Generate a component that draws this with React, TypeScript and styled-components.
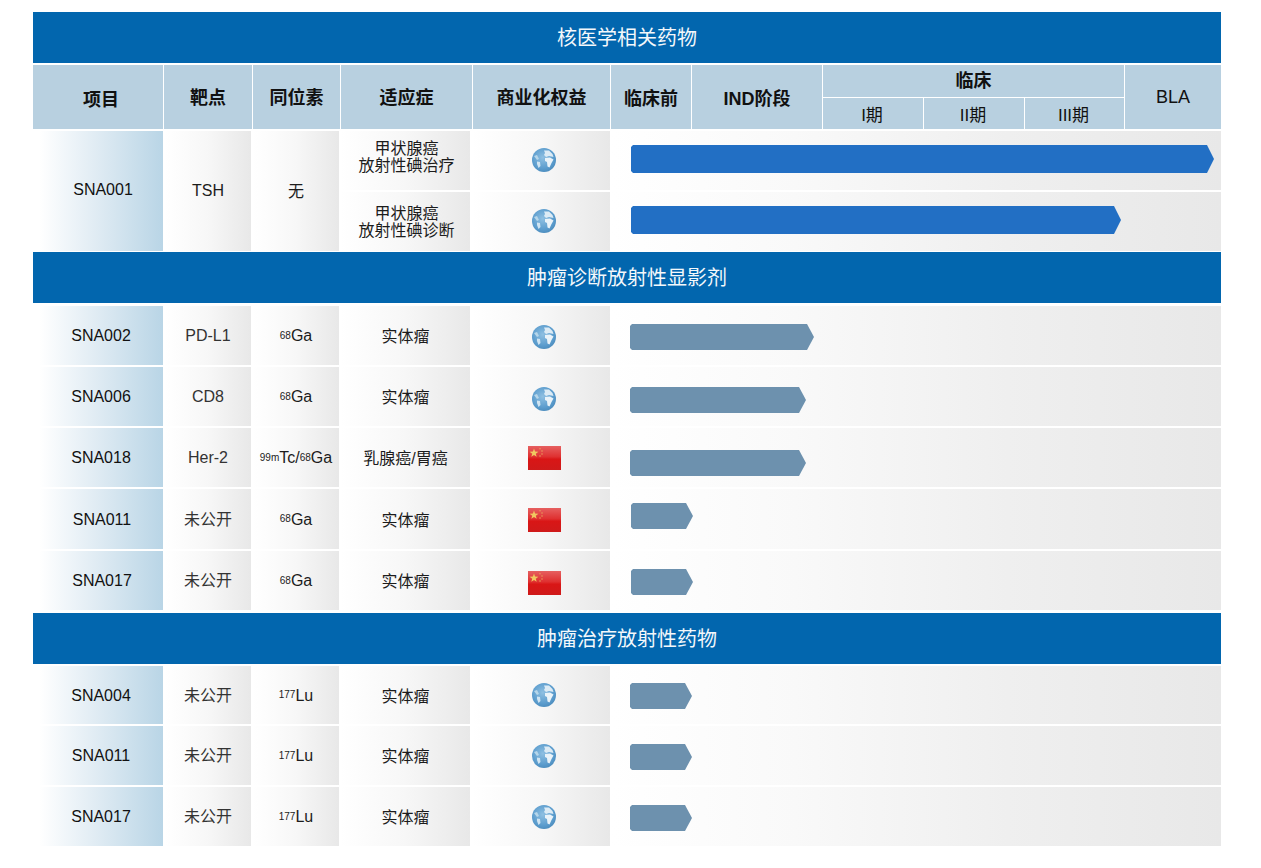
import React from 'react';
import styled, { createGlobalStyle } from 'styled-components';

const GlobalStyle = createGlobalStyle`
  * {
    box-sizing: border-box;
  }
  html, body {
    margin: 0;
    background: #fff;
    font-family: 'Liberation Sans', 'Noto Sans CJK SC', sans-serif;
    color: #1c1c1c;
  }
`;

const Page = styled.div`
  width: 1221px;
  padding: 12px 0 0 33px;
`;

const Banner = styled.div<{ $after: number }>`
  height: 51px;
  margin-bottom: ${(p) => p.$after}px;
  padding-bottom: 2px;
  display: flex;
  align-items: center;
  justify-content: center;
  background: #0266ae;
  color: #f4f8fb;
  font-size: 20px;
`;

const Head = styled.div`
  display: grid;
  grid-template-columns: 130px 88px 87px 131px 137px 80px 130px 301px 96px;
  column-gap: 1px;
  height: 64px;
  margin-bottom: 2px;
`;

const HeadCell = styled.div<{ $plain?: boolean; $drop?: number; $right?: number }>`
  display: flex;
  align-items: center;
  justify-content: center;
  padding: ${(p) => p.$drop ?? 0}px 0 2px ${(p) => p.$right ?? 0}px;
  background: #b8d0e0;
  font-size: 18px;
  font-weight: ${(p) => (p.$plain ? 400 : 700)};
  color: #111;
`;

const Clinical = styled.div`
  display: flex;
  flex-direction: column;
  row-gap: 1px;
`;

const ClinicalTitle = styled(HeadCell)`
  height: 32px;
  padding-bottom: 4px;
`;

const Phases = styled.div`
  flex: 1;
  display: grid;
  grid-template-columns: 100px 100px 99px;
  column-gap: 1px;
`;

const Phase = styled(HeadCell)`
  font-size: 17px;
  font-weight: 400;
  padding: 0 2px 0 0;
`;

const Rows = styled.div<{ $heights: string; $after: number }>`
  display: grid;
  grid-template-columns: 130px 86px 86px 129px 138px 1fr;
  grid-template-rows: ${(p) => p.$heights};
  gap: 2px;
  margin-bottom: ${(p) => p.$after}px;
`;

const Cell = styled.div<{ $span?: number; $lift?: number }>`
  grid-row: span ${(p) => p.$span ?? 1};
  display: flex;
  align-items: center;
  justify-content: center;
  padding-bottom: ${(p) => p.$lift ?? 0}px;
  text-align: center;
  font-size: 16px;
  line-height: 17px;
  background: linear-gradient(90deg, #fff 0%, #f7f7f7 50%, #e8e8e8 100%);
`;

const ProjectCell = styled(Cell)<{ $right?: number }>`
  padding-left: ${(p) => p.$right ?? 6}px;
  color: #111;
  background: linear-gradient(90deg, #fff 5%, #dfebf3 50%, #b9d5e6 100%);
`;

const TargetCell = styled(Cell)`
  color: #333;
`;

const IndicationCell = styled(Cell)<{ $top?: number }>`
  padding-top: ${(p) => p.$top ?? 2}px;
  padding-left: ${(p) => ((p.$top ?? 2) === 2 ? 0 : 2)}px;
`;

const RightsCell = styled(Cell)<{ $drop?: number }>`
  padding-left: 6px;
  padding-top: ${(p) => p.$drop ?? 0}px;
`;

const Sup = styled.sup`
  font-size: 10px;
  line-height: 0;
  vertical-align: 6px;
`;

const Track = styled(Cell)`
  justify-content: flex-start;
  align-items: flex-start;
  padding-left: 18px;
  background: linear-gradient(90deg, #fff 0%, #f9f9f9 30%, #efefef 65%, #e8e8e8 100%);
`;

// width and offsets come from the row data, the notch is the same for every bar
const Bar = styled.div<{ $clinical?: boolean }>`
  height: ${(p) => (p.$clinical ? 28 : 26)}px;
  background: ${(p) => (p.$clinical ? '#226fc4' : '#6d91ae')};
  clip-path: polygon(
    2px 0,
    calc(100% - 7px) 0,
    100% 50%,
    calc(100% - 7px) 100%,
    2px 100%,
    0 calc(100% - 2px),
    0 2px
  );
`;

const Globe = () => (
  <svg width="26" height="26" viewBox="0 0 26 26">
    <defs>
      <radialGradient id="sea" cx="45%" cy="40%" r="65%">
        <stop offset="0%" stopColor="#8fc0e2" />
        <stop offset="70%" stopColor="#5b9ccd" />
        <stop offset="100%" stopColor="#4a8abb" />
      </radialGradient>
      <filter id="soft">
        <feGaussianBlur stdDeviation="0.6" />
      </filter>
    </defs>
    <circle cx="13" cy="13" r="12" fill="url(#sea)" />
    <g filter="url(#soft)">
      <path d="M13 3.5 L18 3.5 L21.5 7 L22.5 10 L18 9 L15 10 L13 8 L14 6 Z" fill="#dcebf5" />
      <path d="M14 11 L19 10.5 L22.5 12.5 L20.5 16 L18.5 20.5 L16.5 19.5 L16 15 L14 14 Z" fill="#eaf3f9" />
      <path d="M3 9 L6 8 L8 12 L6 13 Z" fill="#b6d6ea" />
      <path d="M6 14.5 L9 15 L9.5 19 L7.5 21 L6 17 Z" fill="#cfe4f2" />
    </g>
  </svg>
);

const Flag = () => (
  <svg width="33" height="24" viewBox="0 0 33 24">
    <defs>
      <linearGradient id="red" x1="0" y1="0" x2="0" y2="1">
        <stop offset="0%" stopColor="#e66060" />
        <stop offset="45%" stopColor="#df3030" />
        <stop offset="55%" stopColor="#d91616" />
        <stop offset="100%" stopColor="#cf1a1a" />
      </linearGradient>
    </defs>
    <rect x="0" y="0" width="33" height="24" fill="url(#red)" />
    <polygon
      points="6,2.5 7.1,5.6 10.4,5.7 7.8,7.7 8.7,10.8 6,9 3.3,10.8 4.2,7.7 1.6,5.7 4.9,5.6"
      fill="#f0c860"
    />
    <circle cx="12" cy="2.8" r="0.8" fill="#e99a5a" />
    <circle cx="14" cy="5" r="0.8" fill="#e99a5a" />
    <circle cx="14" cy="8" r="0.8" fill="#e99a5a" />
    <circle cx="12" cy="10" r="0.8" fill="#e99a5a" />
  </svg>
);

type Row = {
  id: string;
  target: string;
  iso: React.ReactNode;
  ind: string;
  cn?: boolean;
  bar: number;
  top: number;
  left?: number;
  drop?: number;
  idRight?: number;
};

const G68 = (
  <>
    <Sup>68</Sup>Ga
  </>
);
const L177 = (
  <>
    <Sup>177</Sup>Lu
  </>
);

const imaging: Row[] = [
  { id: 'SNA002', target: 'PD-L1', iso: G68, ind: '实体瘤', bar: 184, top: 18, drop: 2 },
  { id: 'SNA006', target: 'CD8', iso: G68, ind: '实体瘤', bar: 176, top: 20, drop: 4 },
  {
    id: 'SNA018',
    target: 'Her-2',
    iso: (
      <>
        <Sup>99m</Sup>Tc/<Sup>68</Sup>Ga
      </>
    ),
    ind: '乳腺癌/胃癌',
    cn: true,
    bar: 176,
    top: 22,
  },
  { id: 'SNA011', target: '未公开', iso: G68, ind: '实体瘤', cn: true, bar: 62, top: 14, left: 1, drop: 2, idRight: 8 },
  { id: 'SNA017', target: '未公开', iso: G68, ind: '实体瘤', cn: true, bar: 62, top: 18, left: 1, drop: 4, idRight: 8 },
];

const therapy: Row[] = [
  { id: 'SNA004', target: '未公开', iso: L177, ind: '实体瘤', bar: 62, top: 17 },
  { id: 'SNA011', target: '未公开', iso: L177, ind: '实体瘤', bar: 62, top: 18 },
  { id: 'SNA017', target: '未公开', iso: L177, ind: '实体瘤', bar: 62, top: 18 },
];

const RowCells = ({ row }: { row: Row }) => (
  <>
    <ProjectCell $right={row.idRight}>{row.id}</ProjectCell>
    <TargetCell>{row.target}</TargetCell>
    <Cell>{row.iso}</Cell>
    <IndicationCell>{row.ind}</IndicationCell>
    <RightsCell $drop={row.drop}>{row.cn ? <Flag /> : <Globe />}</RightsCell>
    <Track>
      <Bar style={{ width: row.bar, marginTop: row.top, marginLeft: row.left ?? 0 }} />
    </Track>
  </>
);

export default function App() {
  return (
    <Page>
      <GlobalStyle />
      <Banner $after={2}>核医学相关药物</Banner>
      <Head>
        <HeadCell $drop={4} $right={6}>
          项目
        </HeadCell>
        <HeadCell>靶点</HeadCell>
        <HeadCell>同位素</HeadCell>
        <HeadCell>适应症</HeadCell>
        <HeadCell>商业化权益</HeadCell>
        <HeadCell $drop={2}>临床前</HeadCell>
        <HeadCell $drop={2}>IND阶段</HeadCell>
        <Clinical>
          <ClinicalTitle>临床</ClinicalTitle>
          <Phases>
            <Phase>I期</Phase>
            <Phase>II期</Phase>
            <Phase>III期</Phase>
          </Phases>
        </Clinical>
        <HeadCell $plain $drop={2}>
          BLA
        </HeadCell>
      </Head>
      <Rows $heights="59px 59px" $after={1}>
        <ProjectCell $span={2} $lift={4} $right={10}>
          SNA001
        </ProjectCell>
        <Cell $span={2} $lift={2}>
          TSH
        </Cell>
        <Cell $span={2}>无</Cell>
        <IndicationCell $top={0} $lift={8}>
          甲状腺癌
          <br />
          放射性碘治疗
        </IndicationCell>
        <RightsCell $lift={2}>
          <Globe />
        </RightsCell>
        <Track>
          <Bar $clinical style={{ width: 583, marginTop: 14, marginLeft: 1 }} />
        </Track>
        <IndicationCell $top={1}>
          甲状腺癌
          <br />
          放射性碘诊断
        </IndicationCell>
        <RightsCell $lift={2}>
          <Globe />
        </RightsCell>
        <Track>
          <Bar $clinical style={{ width: 490, marginTop: 14, marginLeft: 1 }} />
        </Track>
      </Rows>
      <Banner $after={3}>肿瘤诊断放射性显影剂</Banner>
      <Rows $heights="59px 59px 59px 60px 59px" $after={3}>
        {imaging.map((row) => (
          <RowCells key={row.id} row={row} />
        ))}
      </Rows>
      <Banner $after={2}>肿瘤治疗放射性药物</Banner>
      <Rows $heights="58px 59px 59px" $after={0}>
        {therapy.map((row) => (
          <RowCells key={row.id} row={row} />
        ))}
      </Rows>
    </Page>
  );
}
